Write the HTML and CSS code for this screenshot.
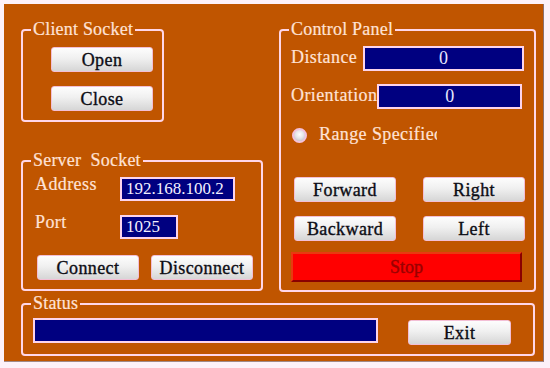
FILE: index.html
```html
<!DOCTYPE html>
<html>
<head>
<meta charset="utf-8">
<link rel="stylesheet" href="styles.css">
</head>
<body>
<div class="window">
  <div class="left-col">
    <div class="group client">
      <div class="legend">Client Socket</div>
      <div class="client-body">
        <div class="btn">Open</div>
        <div class="btn">Close</div>
      </div>
    </div>
    <div class="group server">
      <div class="legend">Server&nbsp; Socket</div>
      <div class="server-body">
        <div class="field-row">
          <span class="lbl lbl-server">Address</span>
          <span class="tb tb-addr">192.168.100.2</span>
        </div>
        <div class="field-row">
          <span class="lbl lbl-server">Port</span>
          <span class="tb tb-port">1025</span>
        </div>
        <div class="btn-row">
          <div class="btn">Connect</div>
          <div class="btn">Disconnect</div>
        </div>
      </div>
    </div>
  </div>

  <div class="group control">
    <div class="legend">Control Panel</div>
    <div class="control-body">
      <div class="ctl-row">
        <span class="lbl">Distance</span>
        <span class="tb tb-num tb-dist">0</span>
      </div>
      <div class="ctl-row row-orient">
        <span class="lbl">Orientation</span>
        <span class="tb tb-num tb-orient">0</span>
      </div>
      <div class="radio-row">
        <span class="radio"></span>
        <span class="radio-text">Range Specified</span>
      </div>
      <div class="move-grid">
        <div class="btn">Forward</div>
        <div class="btn">Right</div>
        <div class="btn">Backward</div>
        <div class="btn">Left</div>
      </div>
      <div class="stop">Stop</div>
    </div>
  </div>

  <div class="group status">
    <div class="legend">Status</div>
    <div class="status-body">
      <span class="tb tb-status"></span>
      <div class="btn btn-exit">Exit</div>
    </div>
  </div>
</div>
</body>
</html>
```
FILE: styles.css
```css
* { box-sizing: border-box; }

body {
  margin: 0;
  background: #fdf1f9;
  font-family: "Liberation Serif", "Times New Roman", serif;
}

.window {
  margin: 4px 0 0 4px;
  width: 540px;
  height: 358px;
  background: #c05500;
  border-right: 1px solid #8c7070;
  border-bottom: 1px solid #a08a8a;
  padding: 25px 0 0 17px;
  display: grid;
  grid-template-columns: 242px 257px;
  grid-template-rows: 263px 53px;
  column-gap: 16px;
  row-gap: 11px;
}

.left-col {
  display: flex;
  flex-direction: column;
}

.group {
  border: 2px solid #ffd6e8;
  border-radius: 4px;
}

.legend {
  width: fit-content;
  margin: -11px 0 -7px 8px;
  padding: 0 2px;
  background: #c05500;
  color: #ffe2d6;
  font-size: 18px;
  line-height: 18px;
  letter-spacing: 0.2px;
  white-space: nowrap;
  -webkit-text-stroke: 0.2px #ffe2d6;
}

.client { width: 143px; height: 93px; }
.server { width: 242px; height: 131px; margin-top: 38px; }
.control { height: 263px; }
.status { grid-column: 1 / span 2; width: 514px; }

.btn {
  display: flex;
  align-items: center;
  justify-content: center;
  width: 102px;
  height: 25px;
  border: 1px solid #f3bfd6;
  border-radius: 3px;
  background: linear-gradient(#fdfdfd 0%, #f0f0f0 45%, #d6d6d6 100%);
  color: #0c0c14;
  font-size: 18px;
  line-height: 20px;
  letter-spacing: 0.4px;
  white-space: nowrap;
  -webkit-text-stroke: 0.35px #0c0c14;
}

.client-body {
  padding: 16px 0 0 28px;
  display: flex;
  flex-direction: column;
  gap: 14px;
}

.lbl {
  color: #ffe2d6;
  font-size: 18px;
  line-height: 20px;
  letter-spacing: 0.4px;
  white-space: nowrap;
  -webkit-text-stroke: 0.2px #ffe2d6;
}

.tb {
  display: block;
  height: 24px;
  background: #000080;
  border: 2px solid #fcd4ec;
  color: #f4f0ff;
  font-size: 17px;
  line-height: 20px;
  padding-left: 4px;
  white-space: nowrap;
  overflow: hidden;
}

.server-body {
  padding: 15px 0 0 12px;
  display: flex;
  flex-direction: column;
  gap: 14px;
}

.field-row {
  display: flex;
  align-items: flex-start;
  height: 24px;
}

.lbl-server {
  width: 85px;
  margin-top: -3px;
}

.tb-addr { width: 115px; }
.tb-port { width: 58px; }

.btn-row {
  display: flex;
  gap: 12px;
  margin: 2px 0 0 2px;
}

.control-body {
  padding: 15px 10px 0 10px;
  display: flex;
  flex-direction: column;
}

.ctl-row {
  display: flex;
  align-items: center;
  height: 25px;
}

.ctl-row .lbl { margin-top: -3px; }

.row-orient {
  margin-top: 13px;
  padding-right: 2px;
}

.tb-num {
  height: 25px;
  margin-left: auto;
  text-align: center;
  padding-left: 0;
  color: #e8e8ff;
  font-size: 18px;
}

.tb-dist { width: 161px; }
.tb-orient { width: 145px; }

.radio-row {
  display: flex;
  align-items: flex-start;
  width: 145px;
  height: 20px;
  margin: 15px 0 0 1px;
  overflow: hidden;
}

.radio {
  flex: none;
  width: 15px;
  height: 15px;
  margin-top: 4px;
  border-radius: 50%;
  border: 2px solid #f4c2dc;
  background: radial-gradient(circle at 50% 40%, #ffffff 0%, #e6e6ea 45%, #b4b4bc 100%);
}

.radio-text {
  margin-left: 12px;
  color: #ffe2d6;
  font-size: 18px;
  line-height: 20px;
  letter-spacing: 0.4px;
  white-space: nowrap;
  -webkit-text-stroke: 0.2px #ffe2d6;
}

.move-grid {
  display: grid;
  grid-template-columns: 102px 102px;
  grid-auto-rows: 25px;
  column-gap: 27px;
  row-gap: 14px;
  margin: 33px 0 0 3px;
}

.stop {
  display: flex;
  align-items: center;
  justify-content: center;
  width: 231px;
  height: 30px;
  margin-top: 11px;
  background: #ff0000;
  border-style: solid;
  border-width: 2px;
  border-color: #e83a10 #8a0000 #8a0000 #e83a10;
  color: #9a0000;
  font-size: 18px;
  line-height: 20px;
  -webkit-text-stroke: 0.4px #9a0000;
}

.status-body {
  display: flex;
  align-items: flex-start;
  padding: 13px 0 0 10px;
}

.tb-status {
  width: 345px;
  height: 25px;
}

.btn-exit {
  width: 103px;
  margin: 2px 0 0 30px;
}
```
